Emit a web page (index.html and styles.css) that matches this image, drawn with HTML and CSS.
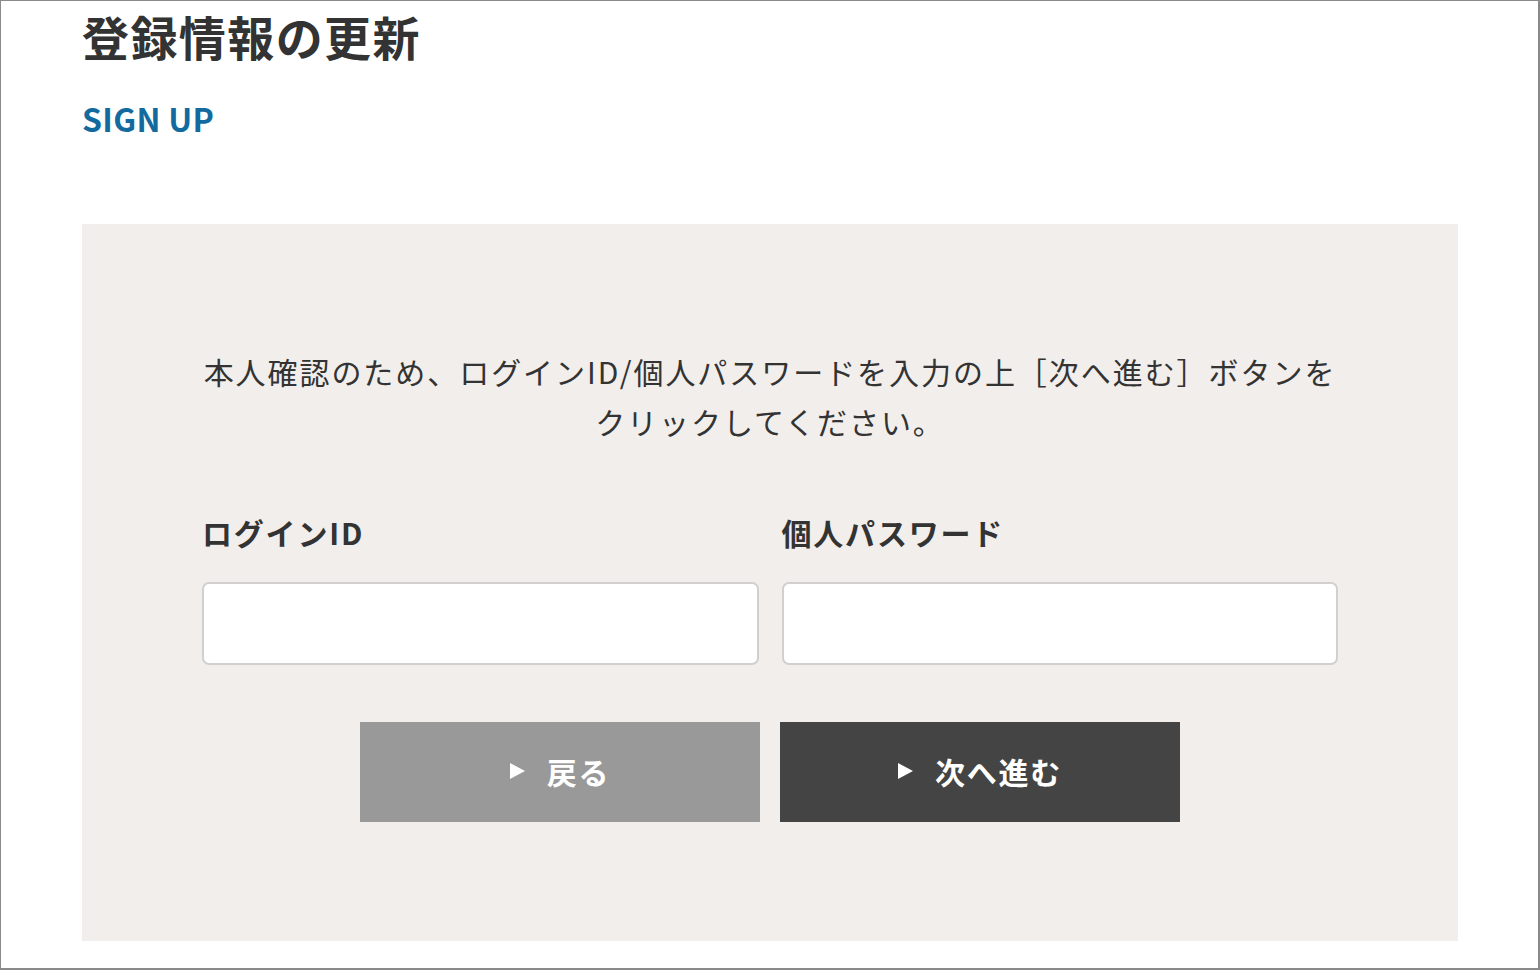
FILE: index.html
```html
<!DOCTYPE html>
<html lang="ja">
<head>
<meta charset="utf-8">
<title>登録情報の更新</title>
<link rel="stylesheet" href="styles.css">
</head>
<body>
<div class="frame">
  <main class="page">
    <h1 class="title">登録情報の更新</h1>
    <p class="sub">SIGN UP</p>
    <section class="panel">
      <p class="lead">本人確認のため、ログインID/個人パスワードを入力の上［次へ進む］ボタンを<br>クリックしてください。</p>
      <div class="fields">
        <div class="field">
          <label class="label" for="login-id">ログインID</label>
          <input class="input" id="login-id" type="text">
        </div>
        <div class="field">
          <label class="label" for="password">個人パスワード</label>
          <input class="input" id="password" type="password">
        </div>
      </div>
      <div class="actions">
        <button class="btn btn-back" type="button"><span class="tri"></span>戻る</button>
        <button class="btn btn-next" type="button"><span class="tri"></span>次へ進む</button>
      </div>
    </section>
  </main>
</div>
</body>
</html>
```

FILE: styles.css
```css
html, body {
  margin: 0;
  padding: 0;
  background: #ffffff;
}
body {
  font-family: "Noto Sans CJK JP", "Noto Sans", sans-serif;
  color: #333333;
}
.frame {
  box-sizing: border-box;
  width: 1540px;
  height: 970px;
  border-style: solid;
  border-color: #8a8a8a;
  border-width: 1px 2px 2px 1px;
  overflow: hidden;
}
.page {
  display: flex;
  flex-direction: column;
  padding: 0 0 0 81px;
}
.title {
  margin: 5px 0 0 0;
  font-size: 47px;
  line-height: 60px;
  font-weight: 700;
  letter-spacing: 0.03em;
  color: #333333;
}
.sub {
  margin: 28px 0 0 0;
  font-size: 32px;
  line-height: 48px;
  font-weight: 700;
  color: #136a9f;
  letter-spacing: 0.01em;
}
.panel {
  margin-top: 82px;
  width: 1376px;
  box-sizing: border-box;
  background: #f1eeeb;
  padding: 122px 120px 119px 120px;
  display: flex;
  flex-direction: column;
}
.lead {
  margin: 0;
  text-align: center;
  font-size: 30px;
  line-height: 50px;
  letter-spacing: 0.065em;
  color: #333333;
}
.fields {
  margin-top: 64px;
  display: flex;
  gap: 23px;
}
.field {
  flex: 1;
  display: flex;
  flex-direction: column;
}
.label {
  font-size: 30px;
  line-height: 44px;
  font-weight: 700;
  letter-spacing: 0.06em;
  color: #333333;
}
.input {
  margin-top: 28px;
  box-sizing: border-box;
  height: 83px;
  width: 100%;
  border: 2px solid #d2d0ce;
  border-radius: 7px;
  background: #ffffff;
  font-size: 24px;
  padding: 0 16px;
  outline: none;
}
.actions {
  margin-top: 57px;
  display: flex;
  justify-content: center;
  gap: 20px;
}
.btn {
  width: 400px;
  height: 100px;
  border: none;
  border-radius: 0;
  display: flex;
  align-items: center;
  justify-content: center;
  gap: 22px;
  padding: 0 0 2px 0;
  font-family: "Noto Sans CJK JP", "Noto Sans", sans-serif;
  font-size: 30px;
  font-weight: 700;
  color: #ffffff;
  letter-spacing: 0.06em;
  cursor: pointer;
}
.btn-back {
  background: #999999;
}
.btn-next {
  background: #444444;
}
.tri {
  width: 0;
  height: 0;
  border-style: solid;
  border-width: 8px 0 8px 15px;
  border-color: transparent transparent transparent #ffffff;
}
```
